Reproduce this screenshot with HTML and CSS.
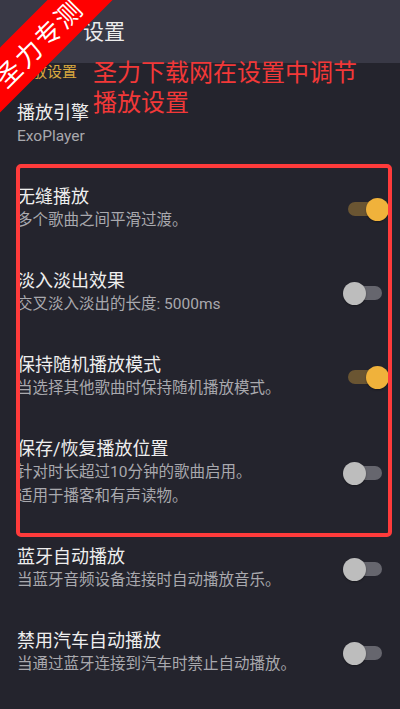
FILE: index.html
```html
<!DOCTYPE html>
<html lang="zh-CN">
<head>
<meta charset="utf-8">
<title>设置</title>
<link rel="stylesheet" href="styles.css">
</head>
<body>
<div class="screen">
  <header class="appbar">
    <span class="appbar-title">设置</span>
  </header>
  <div class="category">播放设置</div>
  <div class="pref">
    <div class="pref-text">
      <div class="pref-title">播放引擎</div>
      <div class="pref-sub">ExoPlayer</div>
    </div>
  </div>
  <div class="pref">
    <div class="pref-text">
      <div class="pref-title">无缝播放</div>
      <div class="pref-sub">多个歌曲之间平滑过渡。</div>
    </div>
    <div class="switch on"><span class="track"></span><span class="thumb"></span></div>
  </div>
  <div class="pref">
    <div class="pref-text">
      <div class="pref-title">淡入淡出效果</div>
      <div class="pref-sub">交叉淡入淡出的长度: 5000ms</div>
    </div>
    <div class="switch"><span class="track"></span><span class="thumb"></span></div>
  </div>
  <div class="pref">
    <div class="pref-text">
      <div class="pref-title">保持随机播放模式</div>
      <div class="pref-sub">当选择其他歌曲时保持随机播放模式。</div>
    </div>
    <div class="switch on"><span class="track"></span><span class="thumb"></span></div>
  </div>
  <div class="pref">
    <div class="pref-text">
      <div class="pref-title">保存/恢复播放位置</div>
      <div class="pref-sub">针对时长超过10分钟的歌曲启用。<br>适用于播客和有声读物。</div>
    </div>
    <div class="switch"><span class="track"></span><span class="thumb"></span></div>
  </div>
  <div class="pref">
    <div class="pref-text">
      <div class="pref-title">蓝牙自动播放</div>
      <div class="pref-sub">当蓝牙音频设备连接时自动播放音乐。</div>
    </div>
    <div class="switch"><span class="track"></span><span class="thumb"></span></div>
  </div>
  <div class="pref">
    <div class="pref-text">
      <div class="pref-title">禁用汽车自动播放</div>
      <div class="pref-sub">当通过蓝牙连接到汽车时禁止自动播放。</div>
    </div>
    <div class="switch"><span class="track"></span><span class="thumb"></span></div>
  </div>

  <div class="annot-box"></div>
  <div class="annot-text">圣力下载网在设置中调节<br>播放设置</div>
  <div class="ribbon">圣力专测</div>
</div>
</body>
</html>
```

FILE: styles.css
```css
* {
  box-sizing: border-box;
  margin: 0;
  padding: 0;
}

html, body {
  width: 400px;
  height: 709px;
  background: #24242d;
}

body {
  font-family: Roboto, "Noto Sans CJK SC", sans-serif;
}

.screen {
  position: relative;
  width: 400px;
  height: 709px;
  overflow: hidden;
  background: #24242d;
}

.appbar {
  height: 63px;
  background: #393946;
  display: flex;
  align-items: center;
  padding-left: 83px;
}

.appbar-title {
  font-size: 21px;
  color: #ececec;
  line-height: 28px;
}

.category {
  height: 20px;
  padding: 0 17px;
  font-size: 15px;
  line-height: 18px;
  color: #d8a83f;
}

.pref {
  display: flex;
  align-items: center;
  padding: 19px 11px 19px 17px;
}

.pref-text {
  flex: 1;
  min-width: 0;
}

.pref-title {
  font-size: 18px;
  line-height: 22px;
  color: #eeeeee;
}

.pref-sub {
  font-size: 15.5px;
  line-height: 24px;
  color: #a9a9ae;
}

.switch {
  position: relative;
  width: 46px;
  height: 23px;
  flex: none;
}

.switch .track {
  position: absolute;
  left: 5px;
  top: 4.5px;
  width: 34px;
  height: 14px;
  border-radius: 7px;
  background: #66666e;
}

.switch .thumb {
  position: absolute;
  left: 0;
  top: 0;
  width: 23px;
  height: 23px;
  border-radius: 50%;
  background: #bdbdbd;
  box-shadow: 0 1px 2px rgba(0, 0, 0, 0.35);
}

.switch.on .track {
  background: #6a5532;
}

.switch.on .thumb {
  left: 23px;
  background: #f0b23b;
}

.annot-box {
  position: absolute;
  left: 16px;
  top: 164px;
  width: 376px;
  height: 373px;
  border: 4px solid #ff3b3b;
  border-radius: 5px;
}

.annot-text {
  position: absolute;
  left: 93px;
  top: 56px;
  font-family: "Noto Sans CJK SC", sans-serif;
  font-size: 24px;
  line-height: 30px;
  color: #f23838;
  white-space: nowrap;
}

.ribbon {
  position: absolute;
  left: -72px;
  top: 19px;
  width: 220px;
  height: 46px;
  background: #ff0000;
  color: #ffffff;
  font-family: "Noto Sans CJK SC", sans-serif;
  font-size: 26px;
  line-height: 46px;
  text-align: center;
  letter-spacing: 2px;
  transform: rotate(-45deg);
}
```
